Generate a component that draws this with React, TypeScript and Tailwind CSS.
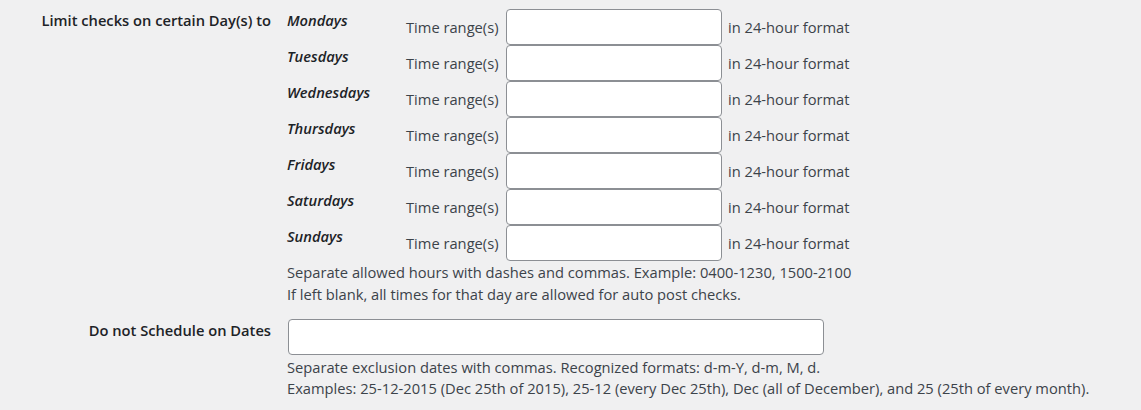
import React from "react";

const DAYS = [
  "Mondays",
  "Tuesdays",
  "Wednesdays",
  "Thursdays",
  "Fridays",
  "Saturdays",
  "Sundays",
];

function TextInput({ className }: { className: string }) {
  return (
    <input
      type="text"
      className={`block bg-white border border-[#8c8f94] rounded-[4px] px-2 outline-none ${className}`}
    />
  );
}

export default function App() {
  return (
    <div className="min-h-screen bg-[#f0f0f1] font-['Open_Sans',sans-serif] text-[14.7px] text-[#3c434a]">
      <div className="grid grid-cols-[287px_1fr] pt-[9px]">
        <div className="text-right pr-[16px] leading-[22px] font-semibold text-[#1d2327]">
          Limit checks on certain Day(s) to
        </div>
        <div>
          {DAYS.map((day) => (
            <div key={day} className="flex h-[36px]">
              <div className="w-[119px] leading-[22px] font-semibold italic text-[#1d2327]">
                {day}
              </div>
              <div className="flex items-center">
                <span className="w-[100px]">Time range(s)</span>
                <TextInput className="w-[216px] h-[36px]" />
                <span className="ml-[6px]">in 24-hour format</span>
              </div>
            </div>
          ))}
          <p className="leading-[22px]">
            Separate allowed hours with dashes and commas. Example: 0400-1230,
            1500-2100
            <br />
            If left blank, all times for that day are allowed for auto post
            checks.
          </p>
        </div>

        <div className="mt-[14px] text-right pr-[16px] leading-[22px] font-semibold text-[#1d2327]">
          Do not Schedule on Dates
        </div>
        <div className="mt-[14px]">
          <TextInput className="w-[536px] h-[36px] ml-px" />
          <p className="mt-[2px] leading-[21px]">
            Separate exclusion dates with commas. Recognized formats: d-m-Y,
            d-m, M, d.
            <br />
            Examples: 25-12-2015 (Dec 25th of 2015), 25-12 (every Dec 25th), Dec
            (all of December), and 25 (25th of every month).
          </p>
        </div>
      </div>
    </div>
  );
}
